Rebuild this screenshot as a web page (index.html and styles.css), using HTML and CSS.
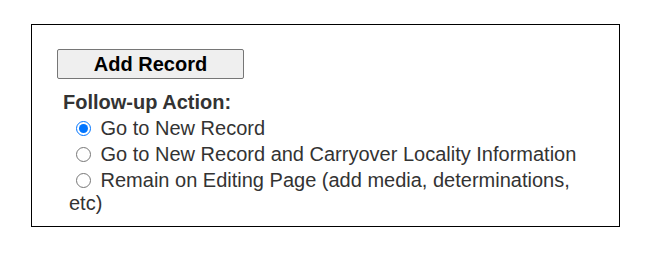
FILE: index.html
```html
<!DOCTYPE html>
<html>
<head>
<meta charset="utf-8">
<link rel="stylesheet" href="styles.css">
</head>
<body>
<div class="panel">
  <button type="button" class="add-btn">Add Record</button>
  <div class="followup">
    <div class="followup-title">Follow-up Action:</div>
    <div class="options">
      <div class="option"><input type="radio" name="action" checked> Go to New Record</div>
      <div class="option"><input type="radio" name="action"> Go to New Record and Carryover Locality Information</div>
      <div class="option"><input type="radio" name="action"> Remain on Editing Page (add media, determinations, etc)</div>
    </div>
  </div>
</div>
</body>
</html>
```
FILE: styles.css
```css
html, body {
  margin: 0;
  padding: 0;
  background: #fff;
}
body {
  font-family: "Liberation Sans", Arial, sans-serif;
  color: #333;
  padding: 24px 0 0 31px;
}
.panel {
  box-sizing: border-box;
  width: 589px;
  height: 203px;
  border: 1px solid #000;
  padding: 24px 31px 0 25px;
}
.add-btn {
  display: block;
  box-sizing: border-box;
  width: 187px;
  height: 30px;
  margin: 0;
  padding: 0;
  background: #efefef;
  border: 1px solid #767676;
  border-radius: 2px;
  font-family: "Liberation Sans", Arial, sans-serif;
  font-size: 20px;
  font-weight: bold;
  color: #000;
}
.followup {
  margin-top: 12px;
  padding-left: 6px;
  font-size: 20px;
  line-height: 23px;
}
.followup-title {
  font-weight: bold;
}
.options {
  padding-left: 6px;
}
.option {
  margin-top: 3px;
}
.option:first-child {
  margin-top: 3px;
}
.option input {
  width: 15px;
  height: 15px;
  margin: 4px 4px 0 7px;
  vertical-align: top;
}
```
